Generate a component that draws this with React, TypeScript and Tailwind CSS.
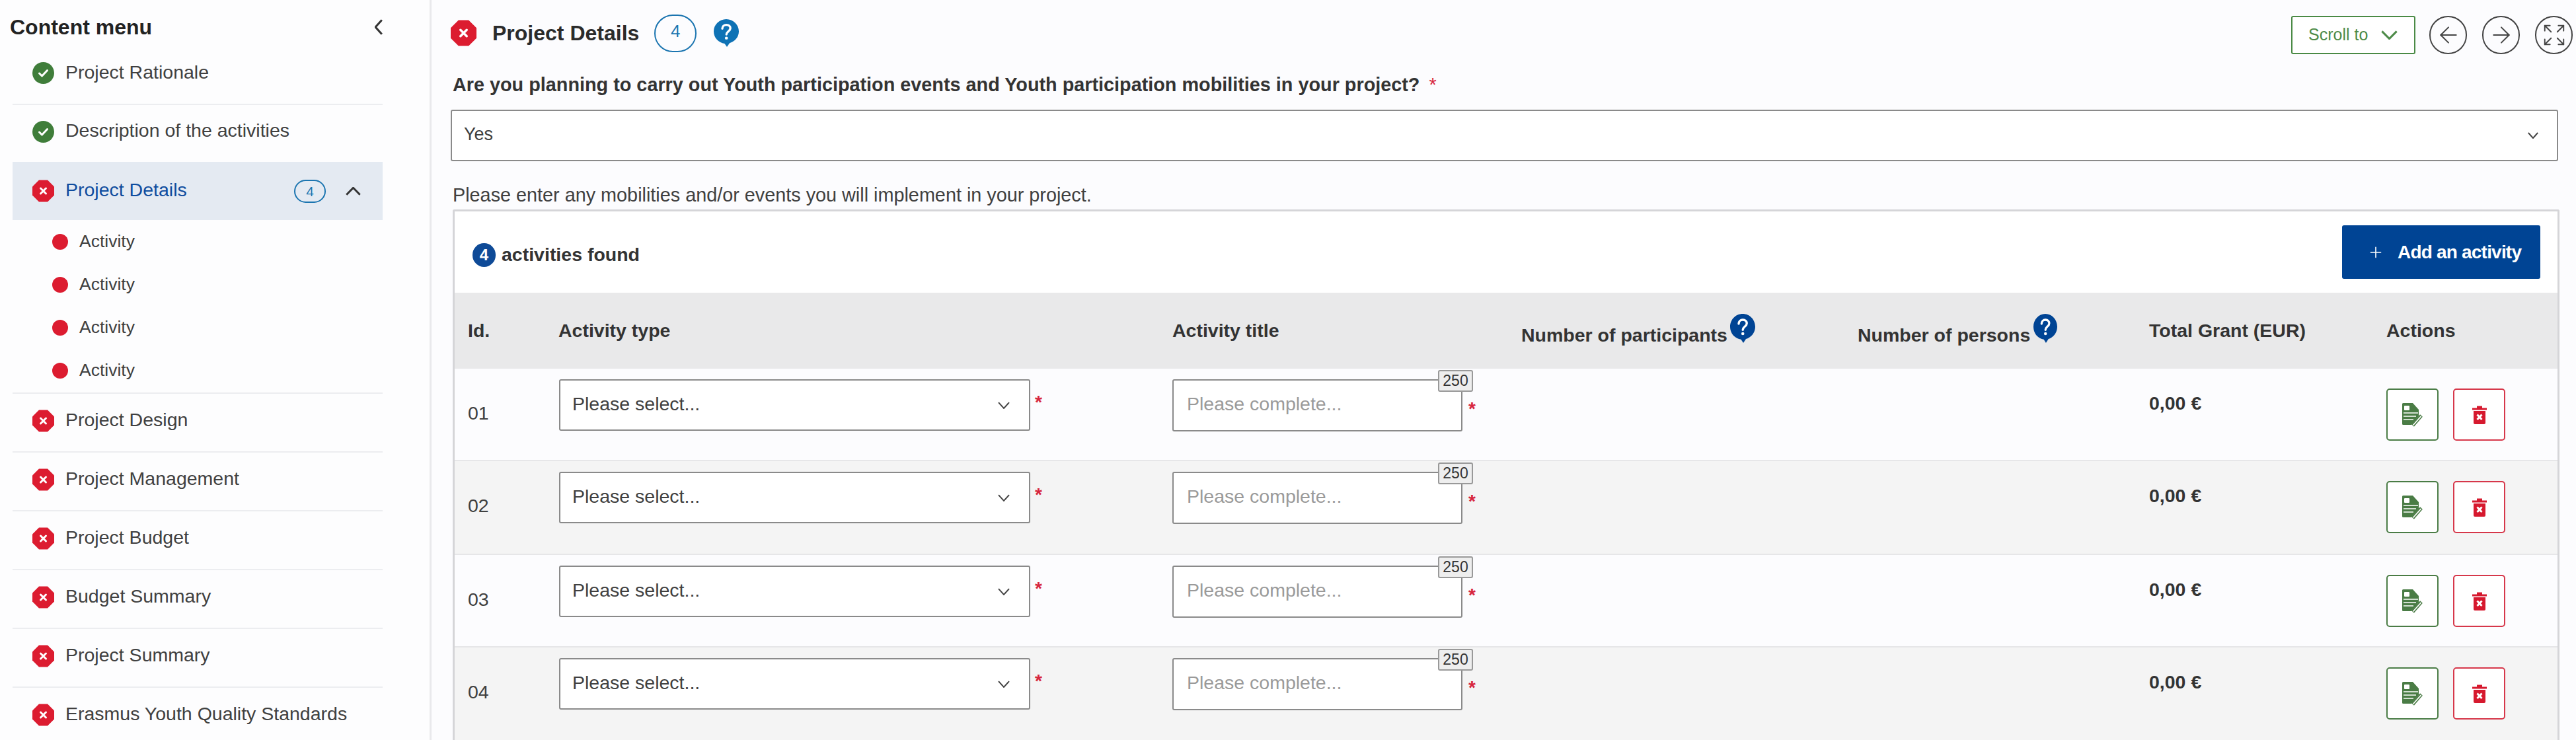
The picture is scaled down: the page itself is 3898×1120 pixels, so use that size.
import { ArrowLeft, ArrowRight, Expand, Plus } from "lucide-react";

const topItems = [
  { label: "Project Rationale", rowClass: "h-[89px] border-b-2 border-[#ecedf0] pb-[6px]" },
  { label: "Description of the activities", rowClass: "h-[86px] pb-[6px]" },
];
const lowerItems = ["Project Design", "Project Management", "Project Budget", "Budget Summary", "Project Summary", "Erasmus Youth Quality Standards"];
const activities = [
  { id: "01", rowClass: "h-[140px] bg-[#fcfcfe] border-b-2 border-[#e6e6e8]" },
  { id: "02", rowClass: "h-[142px] bg-[#f4f4f4] border-b-2 border-[#e6e6e8]" },
  { id: "03", rowClass: "h-[140px] bg-[#fcfcfe] border-b-2 border-[#e6e6e8]" },
  { id: "04", rowClass: "h-[141px] bg-[#f4f4f4]" },
];
const gridCols = "grid grid-cols-[157px_929px_528px_509px_441px_359px_259px]";

function OkIcon() {
  return (
    <svg viewBox="0 0 33 33" className="w-[33px] h-[33px] shrink-0">
      <circle cx="16.5" cy="16.5" r="16.5" fill="#3f7d3a" />
      <path d="M10.5 17l4 4 8-8.5" fill="none" stroke="#fff" strokeWidth="3" strokeLinecap="round" strokeLinejoin="round" />
    </svg>
  );
}

function ErrorIcon({ className = "w-[33px] h-[34px]" }: { className?: string }) {
  return (
    <svg viewBox="0 0 33 33" className={`${className} shrink-0`}>
      <polygon points="10,0 23,0 33,10 33,23 23,33 10,33 0,23 0,10" fill="#dc1c30" />
      <path d="M12.5 12.5l8 8M20.5 12.5l-8 8" fill="none" stroke="#fff" strokeWidth="3" strokeLinecap="round" />
    </svg>
  );
}

function HelpIcon({ className, color }: { className: string; color: string }) {
  return (
    <svg viewBox="0 0 38 44" preserveAspectRatio="none" className={`${className} shrink-0`}>
      <path d="M19 0C8.5 0 0 8.7 0 19.5 0 29.4 7 37.5 16.5 38.8L20 44l4-6C32.300 35.600 38 28.300 38 19.500 38 8.700 29.500 0 19 0Z" fill={color} />
      <path d="M13 15c0-3.600 2.700-6 6.200-6s6 2.200 6 5.400c0 4.800-6 5-6 9.800" fill="none" stroke="#fff" strokeWidth="3.400" strokeLinecap="round" />
      <circle cx="19.200" cy="30" r="2.300" fill="#fff" />
    </svg>
  );
}

function Chevron({ dir = "down", className, color = "#444", width = 2 }: { dir?: "down" | "up" | "left"; className: string; color?: string; width?: number }) {
  const d = dir === "down" ? "M1 1l8 8 8-8" : dir === "up" ? "M1 9l8-8 8 8" : "M9 1l-8 8 8 8";
  const box = dir === "left" ? "0 0 10 18" : "0 0 18 10";
  return (
    <svg viewBox={box} preserveAspectRatio="none" className={`${className} shrink-0`}>
      <path d={d} fill="none" stroke={color} strokeWidth={width} vectorEffect="non-scaling-stroke" />
    </svg>
  );
}

function FileEditIcon() {
  return (
    <svg viewBox="0 0 32 36" className="w-[32px] h-[36px]">
      <path d="M0 1.500A1.500 1.500 0 0 1 1.500 0H16l9 10v10L14 33H1.500A1.500 1.500 0 0 1 0 31.500Z" fill="#4a7c45" />
      <rect x="3" y="4" width="8" height="7" rx="1" fill="#fff" />
      <path d="M2 15h22M2 20h19M2 25h15" stroke="#fff" strokeWidth="1.500" />
      <path d="M29 19l-13 15" stroke="#4a7c45" strokeWidth="5" />
      <path d="M28.500 20l-12 13.500" stroke="#fff" strokeWidth="1.800" />
    </svg>
  );
}

function TrashIcon() {
  return (
    <svg viewBox="0 0 22 28" className="w-[22px] h-[28px]">
      <path d="M0 3.500h22v3H0ZM7 0.500h8v3H7Z" fill="#d6192e" />
      <path d="M2 8h18v18a2 2 0 0 1-2 2H4a2 2 0 0 1-2-2Z" fill="#d6192e" />
      <path d="M7.500 13.500l7 7.500M14.500 13.500l-7 7.500" stroke="#fff" strokeWidth="3" />
    </svg>
  );
}

function Asterisk({ className }: { className: string }) {
  return <span className={`text-[#d7263d] text-[28px] leading-none font-bold ${className}`}>*</span>;
}

export default function App() {
  return (
    <div className="w-[3898px] h-[1120px] overflow-hidden flex bg-[#fcfcfe] text-[#404040] font-['Liberation_Sans',Arial,sans-serif]">
      {/* Content menu */}
      <aside className="w-[653px] h-full shrink-0 pl-[15px] border-r-[3px] border-[#e9e9ec] bg-[#fdfdfe]">
        <div className="h-[70px] w-[564px] flex items-center justify-between pt-[12px]">
          <h2 className="text-[32px] font-bold text-[#222]">Content menu</h2>
          <Chevron dir="left" className="w-[12px] h-[24px]" color="#333" width={3} />
        </div>
        <div className="ml-[4px] w-[560px] text-[28.500px]">
          {topItems.map((item) => (
            <div key={item.label} className={`${item.rowClass} flex items-center gap-[17px] pl-[30px]`}>
              <OkIcon />
              <span className="pb-[3px]">{item.label}</span>
            </div>
          ))}
          <div className="h-[88px] bg-[#e4eaf2] flex items-center gap-[17px] pl-[30px] pr-[33px]">
            <ErrorIcon />
            <span className="text-[#0e4c9e] pb-[3px]">Project Details</span>
            <span className="ml-auto w-[48px] h-[35px] rounded-full border-2 border-[#1b75b0] text-[#1b75b0] text-[21px] leading-none flex items-center justify-center">4</span>
            <Chevron dir="up" className="w-[23px] h-[13px] ml-[13px]" color="#333" width={3} />
          </div>
          <div className="border-b-2 border-[#ecedf0]">
            {[0, 1, 2, 3].map((n) => (
              <div key={n} className="h-[65px] flex items-center gap-[17px] pl-[60px] text-[26.500px]">
                <span className="w-[24px] h-[24px] rounded-full bg-[#dc1c30]" />
                <span>Activity</span>
              </div>
            ))}
            <div className="h-[1px]" />
          </div>
          {lowerItems.map((label) => (
            <div key={label} className="h-[89px] border-b-2 border-[#ecedf0] pb-[6px] flex items-center gap-[17px] pl-[30px]">
              <ErrorIcon />
              <span className="pb-[3px]">{label}</span>
            </div>
          ))}
        </div>
      </aside>

      {/* Project details */}
      <main className="flex-1 pl-[29px] pr-[25px]">
        <header className="h-[100px] -mr-[20px] flex items-center">
          <ErrorIcon className="w-[39px] h-[40px]" />
          <h1 className="ml-[24px] text-[32px] font-bold text-[#2b2b2b]">Project Details</h1>
          <span className="ml-[23px] w-[64px] h-[57px] rounded-full border-2 border-[#1b75b0] text-[#1b75b0] text-[26px] flex items-center justify-center pb-[6px]">4</span>
          <span className="ml-[26px]"><HelpIcon className="w-[38px] h-[42px]" color="#0e72b5" /></span>
          <div className="ml-auto mt-[6px] flex items-center">
            <button className="w-[188px] h-[58px] bg-white border-2 border-[#4a8a45] rounded-[3px] text-[#4c8a47] text-[25px] flex items-center pl-[24px] gap-[20px]">
              Scroll to
              <Chevron className="w-[25px] h-[14px]" color="#4c8a47" width={3} />
            </button>
            <button className="ml-[21px] w-[57px] h-[58px] rounded-full border-2 border-[#444] flex items-center justify-center"><ArrowLeft className="w-[40px] h-[40px] text-[#444]" strokeWidth={1.200} /></button>
            <button className="ml-[23px] w-[57px] h-[58px] rounded-full border-2 border-[#444] flex items-center justify-center"><ArrowRight className="w-[40px] h-[40px] text-[#444]" strokeWidth={1.200} /></button>
            <button className="ml-[23px] w-[57px] h-[58px] rounded-full border-2 border-[#444] flex items-center justify-center"><Expand className="w-[38px] h-[38px] text-[#444]" strokeWidth={1.200} /></button>
          </div>
        </header>

        <div className="h-[58px] pl-[3px] flex items-center text-[28.800px] font-bold text-[#333]">
          Are you planning to carry out Youth participation events and Youth participation mobilities in your project?
          <span className="ml-[14px] text-[#d7263d] font-normal">*</span>
        </div>
        <div className="mt-[8px] w-[3189px] h-[78px] bg-white border-2 border-[#8a8a8a] rounded-[3px] flex items-center justify-between pl-[18px] pr-[28px] text-[27px]">
          <span className="pb-[4px]">Yes</span>
          <Chevron className="w-[16px] h-[10px]" />
        </div>
        <p className="mt-[34px] h-[34px] pl-[3px] text-[28.800px] leading-[34px]">Please enter any mobilities and/or events you will implement in your project.</p>

        <section className="mt-[5px] ml-[3px] w-[3188px] border-[3px] border-b-0 border-[#d5d5d8] rounded-t-[3px] bg-white">
          <div className="h-[123px] flex items-center justify-between pl-[27px] pr-[26px]">
            <div className="flex items-center gap-[9px] pt-[8px] text-[28.500px] font-bold text-[#333]">
              <span className="w-[35px] h-[36px] rounded-full bg-[#0e4a97] text-white text-[24px] flex items-center justify-center">4</span>
              activities found
            </div>
            <button className="w-[300px] h-[81px] bg-[#004494] rounded-[3px] text-white text-[28px] tracking-[-0.800px] font-bold flex items-center pl-[38px] gap-[20px]">
              <Plus className="w-[26px] h-[26px]" strokeWidth={1.500} />
              Add an activity
            </button>
          </div>

          <div className={`${gridCols} h-[115px] bg-[#e9e9ea] items-center text-[28.500px] font-bold text-[#333]`}>
            <div className="pl-[20px]">Id.</div>
            <div>Activity type</div>
            <div>Activity title</div>
            <div className="flex items-center pt-[14px]">
              Number of participants
              <span className="ml-[4px] -mt-[22px]"><HelpIcon className="w-[38px] h-[44px]" color="#004494" /></span>
            </div>
            <div className="flex items-center pt-[14px]">
              Number of persons
              <span className="ml-[5px] -mt-[22px]"><HelpIcon className="w-[36px] h-[44px]" color="#004494" /></span>
            </div>
            <div>Total Grant (EUR)</div>
            <div>Actions</div>
          </div>

          {activities.map((row) => (
            <div key={row.id} className={`${gridCols} ${row.rowClass} items-start text-[28.500px]`}>
              <div className="pl-[20px] pt-[50px] leading-[34px]">{row.id}</div>
              <div className="pt-[16px] pl-[1px] flex items-start">
                <div className="w-[713px] h-[78px] bg-white border-2 border-[#8a8a8a] rounded-[3px] flex items-center justify-between pl-[18px] pr-[29px]">
                  <span className="pb-[3px]">Please select...</span>
                  <Chevron className="w-[18px] h-[11px]" />
                </div>
                <Asterisk className="ml-[7px] mt-[21px]" />
              </div>
              <div className="pt-[16px] flex items-start">
                <div className="relative w-[439px] h-[79px] bg-white border-2 border-[#8a8a8a] rounded-[3px] flex items-center pl-[20px] text-[#9a9a9a]">
                  <span className="pb-[4px]">Please complete...</span>
                  <span className="absolute -top-[16px] -right-[18px] w-[53px] h-[33px] bg-[#eeeeee] border-2 border-[#999] rounded-[3px] text-[#333] text-[23px] flex items-center justify-center">250</span>
                </div>
                <Asterisk className="ml-[9px] mt-[31px]" />
              </div>
              <div />
              <div />
              <div className="pt-[35px] leading-[34px] font-bold text-[#333] text-[28.500px]">0,00 €</div>
              <div className="pt-[30px] flex gap-[22px]">
                <button className="w-[79px] h-[79px] bg-white border-2 border-[#4a7c45] rounded-[5px] flex items-center justify-center"><FileEditIcon /></button>
                <button className="w-[79px] h-[79px] bg-white border-2 border-[#d6374a] rounded-[5px] flex items-center justify-center"><TrashIcon /></button>
              </div>
            </div>
          ))}
        </section>
      </main>
    </div>
  );
}
